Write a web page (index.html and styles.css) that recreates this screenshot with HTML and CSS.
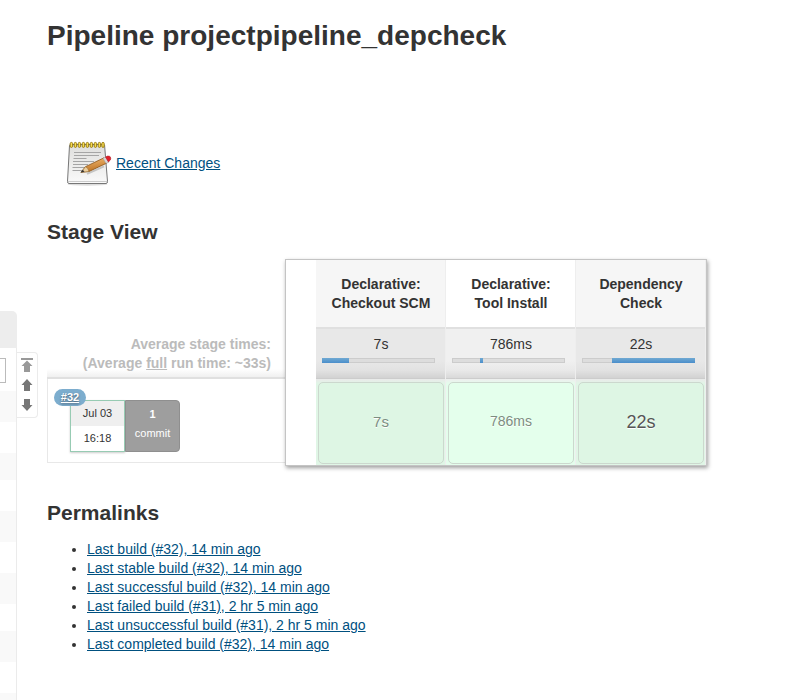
FILE: index.html
```html
<!DOCTYPE html>
<html lang="en">
<head>
<meta charset="utf-8">
<title>Pipeline projectpipeline_depcheck</title>
<link rel="stylesheet" href="styles.css">
</head>
<body>
<aside class="history">
  <div class="history-head"></div>
  <div class="history-search"><span class="search-box"></span></div>
  <div class="row r31 odd"></div>
  <div class="row r31"></div>
  <div class="row r27 odd"></div>
  <div class="row r31"></div>
  <div class="row r31 odd"></div>
  <div class="row r31"></div>
  <div class="row r31 odd"></div>
  <div class="row r27"></div>
  <div class="row r31 odd"></div>
  <div class="row r31"></div>
  <div class="row rest odd"></div>
</aside>
<nav class="pager">
  <svg class="faded" width="12" height="15" viewBox="0 0 12 15"><path d="M0 0h12v2H0zM6 2.500l5.500 5.500H9v6H3V8H.5z"/></svg>
  <svg width="12" height="12" viewBox="0 0 12 12"><path d="M6 0l5.500 6H9v6H3V6H.5z"/></svg>
  <svg width="12" height="12" viewBox="0 0 12 12"><path d="M3 0h6v6h2.500L6 12 .5 6H3z"/></svg>
</nav>
<main>
  <h1>Pipeline projectpipeline_depcheck</h1>
  <div class="changes">
    <svg width="48" height="48" viewBox="0 0 48 48">
      <defs>
        <linearGradient id="paper" x2="0" y2="1"><stop stop-color="#dededc"/><stop offset="1" stop-color="#fafafa"/></linearGradient>
        <linearGradient id="wood" x1=".35" x2=".6" y2="1"><stop stop-color="#f0b870"/><stop offset="1" stop-color="#b96c1c"/></linearGradient>
      </defs>
      <ellipse cx="22.500" cy="45.200" rx="20" ry="1.500" fill="#ddd"/>
      <path d="M5.500 5.500h33q1 0 1.100 1l2.900 36q0 2-1.500 2H4q-1.500 0-1.500-2l2-36q.1-1 1-1z" fill="url(#paper)" stroke="#777"/>
      <path d="M3 42.500h39" stroke="#ccc"/>
      <path d="M9 13.500h27M9 16.500h25M8.500 19.500h13M8 22.500h21M8 25.500h15M7.500 28.500h13M7.500 31.500h10" stroke="#a5a5a5"/>
      <g fill="#f7dc50" stroke="#92750c" stroke-width=".9">
        <rect x="5.200" y="3.400" width="2.400" height="5" rx="1.200"/>
        <rect x="9.200" y="3.400" width="2.400" height="5" rx="1.200"/>
        <rect x="13.200" y="3.400" width="2.400" height="5" rx="1.200"/>
        <rect x="17.200" y="3.400" width="2.400" height="5" rx="1.200"/>
        <rect x="21.200" y="3.400" width="2.400" height="5" rx="1.200"/>
        <rect x="25.200" y="3.400" width="2.400" height="5" rx="1.200"/>
        <rect x="29.200" y="3.400" width="2.400" height="5" rx="1.200"/>
        <rect x="33.200" y="3.400" width="2.400" height="5" rx="1.200"/>
        <rect x="36.800" y="3.400" width="2.400" height="5" rx="1.200"/>
      </g>
      <path d="M22 34.800l17-7.500" stroke="#999" stroke-width="2" opacity=".5"/>
      <path d="M16 33.300l4.500-5.600L39 18.800l3 5.200-18 8.500z" fill="url(#wood)" stroke="#8b5315" stroke-width=".8"/>
      <path d="M16 33.300l4.500-5.600 2.200 1.800L24 32.500z" fill="#edcf9e" stroke="#8b6a38" stroke-width=".5"/>
      <path d="M15.500 33.600l2.300-2.800 1.700 2z" fill="#333"/>
      <path d="M38 19.300l3-1.500 3 5.200-3 1.500z" fill="#d8d8d8" stroke="#999" stroke-width=".5"/>
      <path d="M40.500 18l2-.9q2.800-.6 3.300 1.900.3 2-2.400 3.900z" fill="#e02029" stroke="#b21820" stroke-width=".6"/>
    </svg>
    <a href="#">Recent Changes</a>
  </div>
  <h2 class="stage-title">Stage View</h2>
  <section class="stage-view">
    <div class="builds">
      <div class="averages"><div>Average stage times:</div><div>(Average <u>full</u> run time: ~33s)</div></div>
      <div class="build">
        <div class="build-cards">
          <div class="date"><div class="day">Jul 03</div><div class="time">16:18</div></div>
          <div class="commits"><b>1</b><span>commit</span></div>
          <a class="badge" href="#">#32</a>
        </div>
      </div>
    </div>
    <div class="stages">
      <div class="stage alt">
        <div class="name">Declarative:<br>Checkout SCM</div>
        <div class="avg"><span>7s</span><div class="track"><i class="fill first"></i></div></div>
        <div class="result"><div class="cell">7s</div></div>
      </div>
      <div class="stage">
        <div class="name">Declarative:<br>Tool Install</div>
        <div class="avg"><span>786ms</span><div class="track"><i class="fill second"></i></div></div>
        <div class="result"><div class="cell small">786ms</div></div>
      </div>
      <div class="stage alt">
        <div class="name">Dependency<br>Check</div>
        <div class="avg"><span>22s</span><div class="track"><i class="fill third"></i></div></div>
        <div class="result"><div class="cell large">22s</div></div>
      </div>
    </div>
  </section>
  <h2 class="perma-title">Permalinks</h2>
  <ul>
    <li><a href="#">Last build (#32), 14 min ago</a></li>
    <li><a href="#">Last stable build (#32), 14 min ago</a></li>
    <li><a href="#">Last successful build (#32), 14 min ago</a></li>
    <li><a href="#">Last failed build (#31), 2 hr 5 min ago</a></li>
    <li><a href="#">Last unsuccessful build (#31), 2 hr 5 min ago</a></li>
    <li><a href="#">Last completed build (#32), 14 min ago</a></li>
  </ul>
</main>
</body>
</html>
```
FILE: styles.css
```css
* { box-sizing: border-box; }
body {
  margin: 0;
  height: 700px;
  overflow: hidden;
  display: flex;
  align-items: flex-start;
  background: #fff;
  color: #333;
  font: 14px/19px "Liberation Sans", sans-serif;
}
a { color: #00507f; text-decoration: underline; }

.history { width: 17px; height: 389px; margin-top: 311px; flex: none; overflow: hidden; }
.history-head { height: 37px; background: #ededed; border-radius: 0 5px 0 0; }
.history-search { height: 43px; padding-top: 10px; border-right: 1px solid #ebebeb; }
.search-box { display: block; width: 6px; height: 25px; border: 1px solid #bbb; border-left: 0; }
.row { border-right: 1px solid #ebebeb; }
.odd { background: #f9f9f9; }
.r31 { height: 31px; }
.r27 { height: 27px; }
.rest { height: 40px; }

.pager {
  width: 21px;
  height: 66px;
  margin-top: 352px;
  flex: none;
  border: 1px solid #ebebeb;
  border-left: 0;
  border-radius: 0 4px 4px 0;
  display: flex;
  flex-direction: column;
  align-items: center;
  gap: 7px;
  padding-top: 5px;
}
.pager svg { fill: #777; flex: none; }
.pager .faded { fill: #999; margin-bottom: -1px; }
.pager svg + svg { margin-bottom: 1px; }

main { margin-left: 9px; width: 700px; flex: none; }
h1 { margin: 18px 0 0; font-size: 28px; line-height: 35px; white-space: nowrap; letter-spacing: .01px; }
.changes { display: flex; align-items: center; margin: 86px 0 0 18px; height: 48px; gap: 3px; }
h2 { font-size: 21px; line-height: 25px; }
.stage-title { margin: 32px 0 0; }

.stage-view { display: flex; margin-top: 15px; height: 208px; }
.builds { width: 238px; }
.averages {
  height: 120px;
  padding: 76px 14px 0 0;
  text-align: right;
  font-weight: bold;
  color: #bbb;
  border-bottom: 2px solid #e0e0e0;
  background: linear-gradient(#fff, #f0f0f0) bottom / 100% 8px no-repeat;
}
.build { height: 84px; border: 1px solid #e8e8e8; border-top: 0; border-right: 0; padding: 21px 0 0 22px; }
.build-cards { position: relative; display: flex; width: 110px; height: 52px; font-size: 11px; text-align: center; }
.date { width: 55px; border: 1px solid #97cbb3; box-shadow: 0 1px 2px #ccc; color: #333; }
.day { height: 25px; line-height: 25px; background: #efefef; }
.time { height: 25px; line-height: 25px; background: #fff; }
.commits {
  width: 55px;
  display: flex;
  flex-direction: column;
  background: #9e9e9e;
  border: 1px solid #8f8f8f;
  border-radius: 0 4px 4px 0;
  color: #fff;
  padding-top: 4px;
}
.badge {
  position: absolute;
  left: -16px;
  top: -11px;
  width: 32px;
  height: 17px;
  border-radius: 9px;
  background: #7cadce;
  color: #fff;
  font-weight: bold;
  line-height: 17px;
  text-shadow: 0 1px 2px #456;
}

.stages {
  display: flex;
  width: 422px;
  height: 207px;
  padding-left: 30px;
  border: 1px solid #c4c4c4;
  box-shadow: 1px 2px 4px rgba(0, 0, 0, .38);
  background: #fff;
}
.stage { width: 130px; text-align: center; border-right: 1px solid #eee; }
.name { height: 67px; padding: 15px 0 0 1px; font-weight: bold; }
.avg {
  height: 52px;
  padding-top: 8px;
  border-top: 2px solid #e0e0e0;
  border-bottom: 1px solid #ccc;
  background: linear-gradient(#f0f0f0 65%, #e9e9e9 84%, #d9d9d9);
}
.avg span { display: block; height: 17px; line-height: 17px; margin-top: -1px; padding-left: 1px; }
.track { width: 113px; height: 5px; margin: 5px 0 0 6px; border: 1px solid #ccc; background: #ddd; }
.fill { display: block; height: 5px; margin-top: -1px; background: linear-gradient(#70a9d2, #4a8ecb); }
.first { width: 27px; margin-left: -1px; }
.second { width: 3px; margin-left: 27px; }
.third { width: 83px; margin-left: 29px; }
.result { height: 86px; padding: 3px 1px 1px 2px; background: linear-gradient(#eee, #e4fdec 5px); }
.cell {
  height: 82px;
  line-height: 77px;
  border: 1px solid #ccd8ce;
  border-radius: 5px;
  background: #e4ffec;
  color: #7d8d81;
  text-shadow: 0 1px 0 #fff;
  font-size: 15px;
}
.alt .name { background: #f6f6f6; }
.alt .avg { background: linear-gradient(#e8e8e8 65%, #e2e2e2 84%, #d2d2d2); }
.alt .result { background: linear-gradient(#eaeaea, #e0f6e6 5px); }
.alt .cell { background: #def6e4; }
.cell.small { font-size: 14px; }
.cell.large { font-size: 18px; line-height: 78px; color: #555; }

.perma-title { margin: 33px 0 0; }
ul { margin: 15px 0 0; padding-left: 40px; }
```
